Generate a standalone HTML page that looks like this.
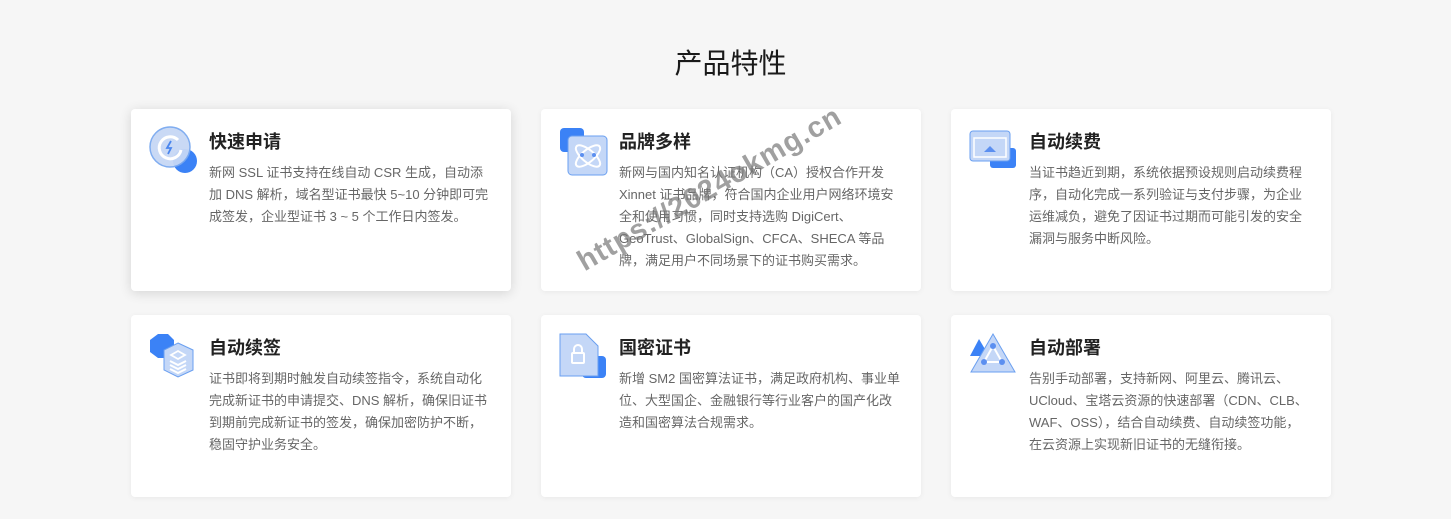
<!DOCTYPE html>
<html><head><meta charset="utf-8"><style>
*{margin:0;padding:0;box-sizing:border-box}
body{width:1451px;height:519px;background:#f6f6f6;font-family:"Liberation Sans","Noto Sans CJK SC",sans-serif;position:relative;overflow:hidden}
h1{position:absolute;top:44px;left:5px;width:1451px;text-align:center;font-size:28px;font-weight:400;color:#1a1a1a;line-height:40px}
.card{position:absolute;width:380px;height:182px;background:#fff;border-radius:4px;box-shadow:0 1px 6px rgba(0,0,0,.06)}
.card.sh{box-shadow:0 2px 12px rgba(0,0,0,.14)}
.card svg{position:absolute;left:17px;top:17px}
.card h3{position:absolute;left:78px;top:20px;font-size:18px;font-weight:700;color:#222;line-height:26px}
.card p{position:absolute;left:78px;top:53px;width:282px;font-size:13px;color:#666;line-height:22px}
.wm{position:absolute;font-size:29px;font-weight:700;color:rgba(120,120,120,.7);transform:rotate(-30deg);transform-origin:0 0;white-space:nowrap;letter-spacing:1px}
</style></head><body>
<h1>产品特性</h1>

<div class="card sh" style="left:131px;top:109px">
<svg width="50" height="50" viewBox="0 0 50 50"><circle cx="37" cy="35" r="12" fill="#3b82f6"/><circle cx="22" cy="21" r="20" fill="#c7d8f5" stroke="#7aa9f0" stroke-width="1.5" opacity=".95"/><path d="M30 14 A11 11 0 1 0 33 24" fill="none" stroke="#fff" stroke-width="3"/><path d="M23 15 L19 22 L23 22 L20 28" fill="none" stroke="#4a86ee" stroke-width="1.8"/></svg>
<h3>快速申请</h3>
<p>新网 SSL 证书支持在线自动 CSR 生成，自动添加 DNS 解析，域名型证书最快 5~10 分钟即可完成签发，企业型证书 3 ~ 5 个工作日内签发。</p>
</div>

<div class="card" style="left:541px;top:109px">
<svg width="50" height="50" viewBox="0 0 50 50"><rect x="2" y="2" width="24" height="24" rx="4" fill="#3b82f6"/><rect x="10" y="10" width="39" height="39" rx="4" fill="#c4d7f7" stroke="#6a9ff0"/><ellipse cx="30" cy="30" rx="15" ry="6" fill="none" stroke="#fff" stroke-width="2" transform="rotate(40 30 30)"/><ellipse cx="30" cy="30" rx="15" ry="6" fill="none" stroke="#fff" stroke-width="2" transform="rotate(-40 30 30)"/><circle cx="24" cy="29" r="2" fill="#5b8ff0"/><circle cx="36" cy="29" r="2" fill="#5b8ff0"/></svg>
<h3>品牌多样</h3>
<p>新网与国内知名认证机构（CA）授权合作开发 Xinnet 证书品牌，符合国内企业用户网络环境安全和使用习惯，同时支持选购 DigiCert、GeoTrust、GlobalSign、CFCA、SHECA 等品牌，满足用户不同场景下的证书购买需求。</p>
</div>

<div class="card" style="left:951px;top:109px">
<svg width="50" height="50" viewBox="0 0 50 50"><rect x="22" y="22" width="26" height="20" rx="3" fill="#3b82f6"/><rect x="2" y="5" width="40" height="30" rx="3" fill="#c4d7f7" stroke="#6a9ff0"/><rect x="6" y="12" width="32" height="19" fill="none" stroke="#fff" stroke-width="1.5"/><path d="M16 26 L22 20 L28 26Z" fill="#5b8ff0"/></svg>
<h3>自动续费</h3>
<p>当证书趋近到期，系统依据预设规则启动续费程序，自动化完成一系列验证与支付步骤，为企业运维减负，避免了因证书过期而可能引发的安全漏洞与服务中断风险。</p>
</div>

<div class="card" style="left:131px;top:315px">
<svg width="50" height="50" viewBox="0 0 50 50"><path d="M10 2 L20 2 L26 8 L26 20 L20 26 L10 26 L2 20 L2 8Z" fill="#3b82f6"/><path d="M30 11 L45 18 L45 38 L30 45 L16 38 L16 18Z" fill="#c4d7f7" stroke="#6a9ff0"/><path d="M30 19 L37 23 L30 27 L23 23Z" fill="none" stroke="#fff" stroke-width="1.8"/><path d="M22 29 L30 33 L38 29 M22 33 L30 37 L38 33 M22 37 L30 41 L38 37" fill="none" stroke="#fff" stroke-width="2"/></svg>
<h3>自动续签</h3>
<p>证书即将到期时触发自动续签指令，系统自动化完成新证书的申请提交、DNS 解析，确保旧证书到期前完成新证书的签发，确保加密防护不断，稳固守护业务安全。</p>
</div>

<div class="card" style="left:541px;top:315px">
<svg width="50" height="50" viewBox="0 0 50 50"><rect x="24" y="24" width="24" height="22" rx="4" fill="#3b82f6"/><path d="M2 2 L28 2 L40 14 L40 44 L2 44Z" fill="#c4d7f7" stroke="#6a9ff0"/><rect x="14" y="21" width="12" height="10" rx="1" fill="none" stroke="#fff" stroke-width="2"/><path d="M16 21 V17 a4 4 0 0 1 8 0 V21" fill="none" stroke="#fff" stroke-width="2"/></svg>
<h3>国密证书</h3>
<p>新增 SM2 国密算法证书，满足政府机构、事业单位、大型国企、金融银行等行业客户的国产化改造和国密算法合规需求。</p>
</div>

<div class="card" style="left:951px;top:315px">
<svg width="50" height="50" viewBox="0 0 50 50"><path d="M11 7 L21 24 L2 24Z" fill="#3b82f6"/><path d="M25 2 L47 40 L3 40Z" fill="#c4d7f7" stroke="#6a9ff0"/><path d="M25 14 L16 30 L34 30Z" fill="none" stroke="#fff" stroke-width="2"/><circle cx="25" cy="14" r="3" fill="#5b8ff0"/><circle cx="16" cy="30" r="3" fill="#5b8ff0"/><circle cx="34" cy="30" r="3" fill="#5b8ff0"/></svg>
<h3>自动部署</h3>
<p>告别手动部署，支持新网、阿里云、腾讯云、UCloud、宝塔云资源的快速部署（CDN、CLB、WAF、OSS），结合自动续费、自动续签功能，在云资源上实现新旧证书的无缝衔接。</p>
</div>

<div class="wm" style="left:572px;top:250px">https://2024okmg.cn</div>
</body></html>
